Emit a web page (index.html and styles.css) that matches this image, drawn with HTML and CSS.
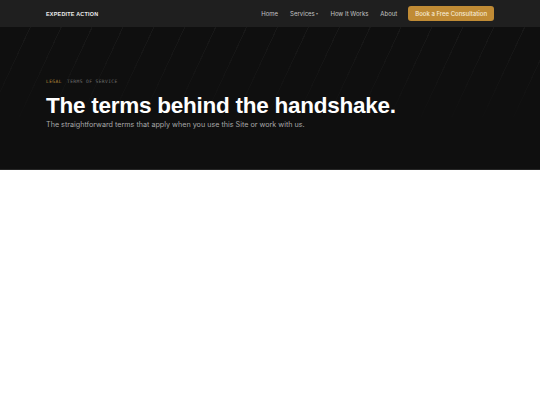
FILE: index.html
```html
<!DOCTYPE html>
<html lang="en">
<head>
<meta charset="utf-8">
<title>Terms of Service — Expedite Action</title>
<link rel="stylesheet" href="styles.css">
</head>
<body>
<header class="nav">
  <div class="nav-inner">
    <a class="brand" href="#">EXPEDITE ACTION</a>
    <nav class="links">
      <a href="#">Home</a>
      <a href="#">Services <span class="caret">▾</span></a>
      <a href="#">How It Works</a>
      <a href="#">About</a>
      <a class="cta" href="#">Book a Free Consultation</a>
    </nav>
  </div>
</header>
<section class="hero">
  <div class="hero-lines"></div>
  <div class="hero-inner">
    <p class="eyebrow"><span class="gold">LEGAL</span> TERMS OF SERVICE</p>
    <h1>The terms behind the handshake.</h1>
    <p class="sub">The straightforward terms that apply when you use this Site or work with us.</p>
  </div>
</section>
<main class="content"></main>
</body>
</html>
```
FILE: styles.css
```css
* { box-sizing: border-box; }
html, body { margin: 0; padding: 0; }
body {
  background: #ffffff;
  font-family: Inter, "Liberation Sans", sans-serif;
}
a { text-decoration: none; color: inherit; }

.nav {
  background: #1f1f1f;
  height: 27px;
}
.nav-inner {
  height: 100%;
  margin: 0 46px;
  display: flex;
  align-items: center;
  justify-content: space-between;
}
.brand {
  color: #ededed;
  font-family: "Liberation Sans", Arial, sans-serif;
  font-size: 5.4px;
  font-weight: 700;
  letter-spacing: 0.25px;
}
.links {
  display: flex;
  align-items: center;
  font-size: 6px;
  color: #c4c4c4;
}
.links a { margin-left: 12px; }
.links a:first-child { margin-left: 0; }
.caret { font-size: 3.5px; vertical-align: 1px; color: #9a9a9a; }
.links .cta {
  margin-left: 11px;
  background: #c08b35;
  color: #f7ecd8;
  font-weight: 500;
  padding: 4px 7px;
  border-radius: 3px;
  line-height: 7px;
}

.hero {
  position: relative;
  background: #0f0f0f;
  height: 143px;
  border-bottom: 1px solid #262626;
  overflow: hidden;
}
.hero-lines {
  position: absolute;
  inset: 0;
  background: repeating-linear-gradient(115deg, transparent 0 27px, rgba(255,255,255,0.04) 27px 28px);
  -webkit-mask-image: linear-gradient(to bottom, #000 0%, transparent 75%);
  mask-image: linear-gradient(to bottom, #000 0%, transparent 75%);
}
.hero-inner {
  position: relative;
  margin: 0 46px;
  padding-top: 52px;
}
.eyebrow {
  margin: 0;
  font-family: "DejaVu Sans Mono", "Liberation Mono", monospace;
  font-size: 4.6px;
  letter-spacing: 0.4px;
  color: #6f6f6f;
  line-height: 6px;
}
.gold { color: #b98a3a; margin-right: 2px; }
h1 {
  margin: 8px 0 0;
  color: #ffffff;
  font-family: "Liberation Sans", Arial, sans-serif;
  font-size: 22.5px;
  font-weight: 700;
  letter-spacing: -0.25px;
  line-height: 26px;
}
.sub {
  margin: 1px 0 0;
  color: #a8a8a8;
  font-size: 7.2px;
  line-height: 10px;
}
.content { height: 234px; }
```
